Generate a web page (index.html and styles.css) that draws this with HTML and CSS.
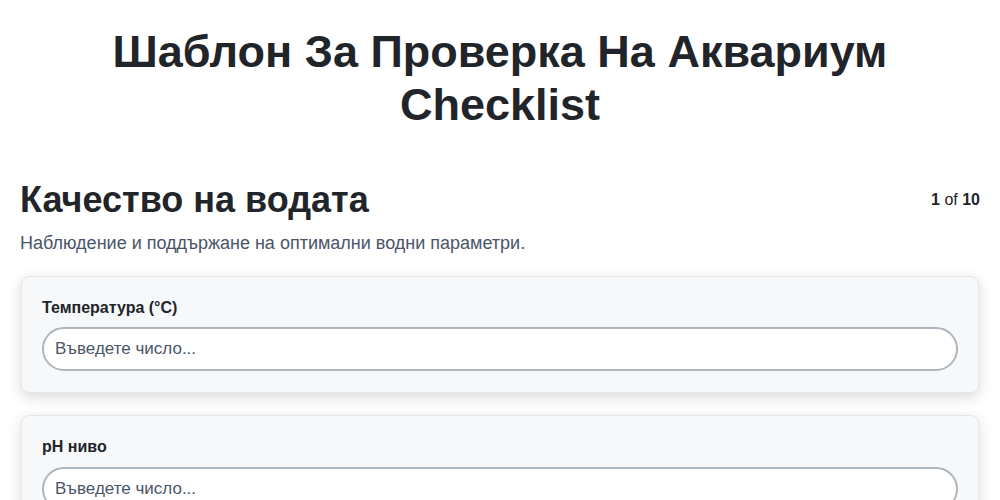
FILE: index.html
```html
<!DOCTYPE html>
<html lang="bg">

<head>
    <meta charset="UTF-8">
    <meta name="viewport" content="width=device-width, initial-scale=1.0">
    <title>Шаблон За Проверка На Аквариум Checklist</title>
    <link rel="stylesheet" href="styles.css">
</head>

<body>
    <div class="page">
        <h1 class="title">Шаблон За Проверка На Аквариум Checklist</h1>

        <div class="section-head">
            <h2>Качество на водата</h2>
            <div class="counter"><b>1</b> of <b>10</b></div>
        </div>
        <p class="section-desc">Наблюдение и поддържане на оптимални водни параметри.</p>

        <div class="card">
            <label for="temp">Температура (°C)</label>
            <input type="number" id="temp" placeholder="Въведете число...">
        </div>

        <div class="card">
            <label for="ph">pH ниво</label>
            <input type="number" id="ph" placeholder="Въведете число...">
        </div>

        <div class="card">
            <label for="amon">Амоняк (ppm)</label>
            <input type="number" id="amon" placeholder="Въведете число...">
        </div>
    </div>
</body>

</html>
```

FILE: styles.css
```css
:root {
    --tekst: #212529;
    --szary: #4a5568;
    --karta: #f7f8fa;
    --ramka: #e5e7eb;
}

html,
body {
    margin: 0;
    background-color: #ffffff;
    color: var(--tekst);
    font-family: 'Liberation Sans', Arial, sans-serif;
}

.page {
    padding: 0 20px 20px 20px;
}

.title {
    font-size: 45px;
    line-height: 53px;
    font-weight: bold;
    text-align: center;
    margin: 25px 60px 47px 60px;
}

.section-head {
    display: flex;
    justify-content: space-between;
    align-items: center;
}

.section-head h2 {
    font-size: 36px;
    line-height: 1.2;
    margin: 0;
}

.counter {
    font-size: 16px;
}

.section-desc {
    font-size: 18px;
    line-height: 1.5;
    color: var(--szary);
    margin: 9px 0 19px 0;
}

.card {
    display: flex;
    flex-direction: column;
    background-color: var(--karta);
    border: 1px solid var(--ramka);
    border-radius: 8px;
    padding: 21px 20px 21px 20px;
    margin: 0 1px 22px 1px;
    box-shadow: 0 4px 14px rgba(0, 0, 0, 0.15);
}

.card label {
    font-size: 16px;
    line-height: 1.2;
    font-weight: bold;
    margin-bottom: 10px;
}

.card input {
    font-family: inherit;
    font-size: 17px;
    height: 44px;
    box-sizing: border-box;
    padding: 0 11px;
    border: 2px solid #adb5bd;
    border-radius: 22px;
    background-color: #ffffff;
    color: var(--tekst);
    outline: none;
}

.card input::placeholder {
    color: var(--szary);
}
```
